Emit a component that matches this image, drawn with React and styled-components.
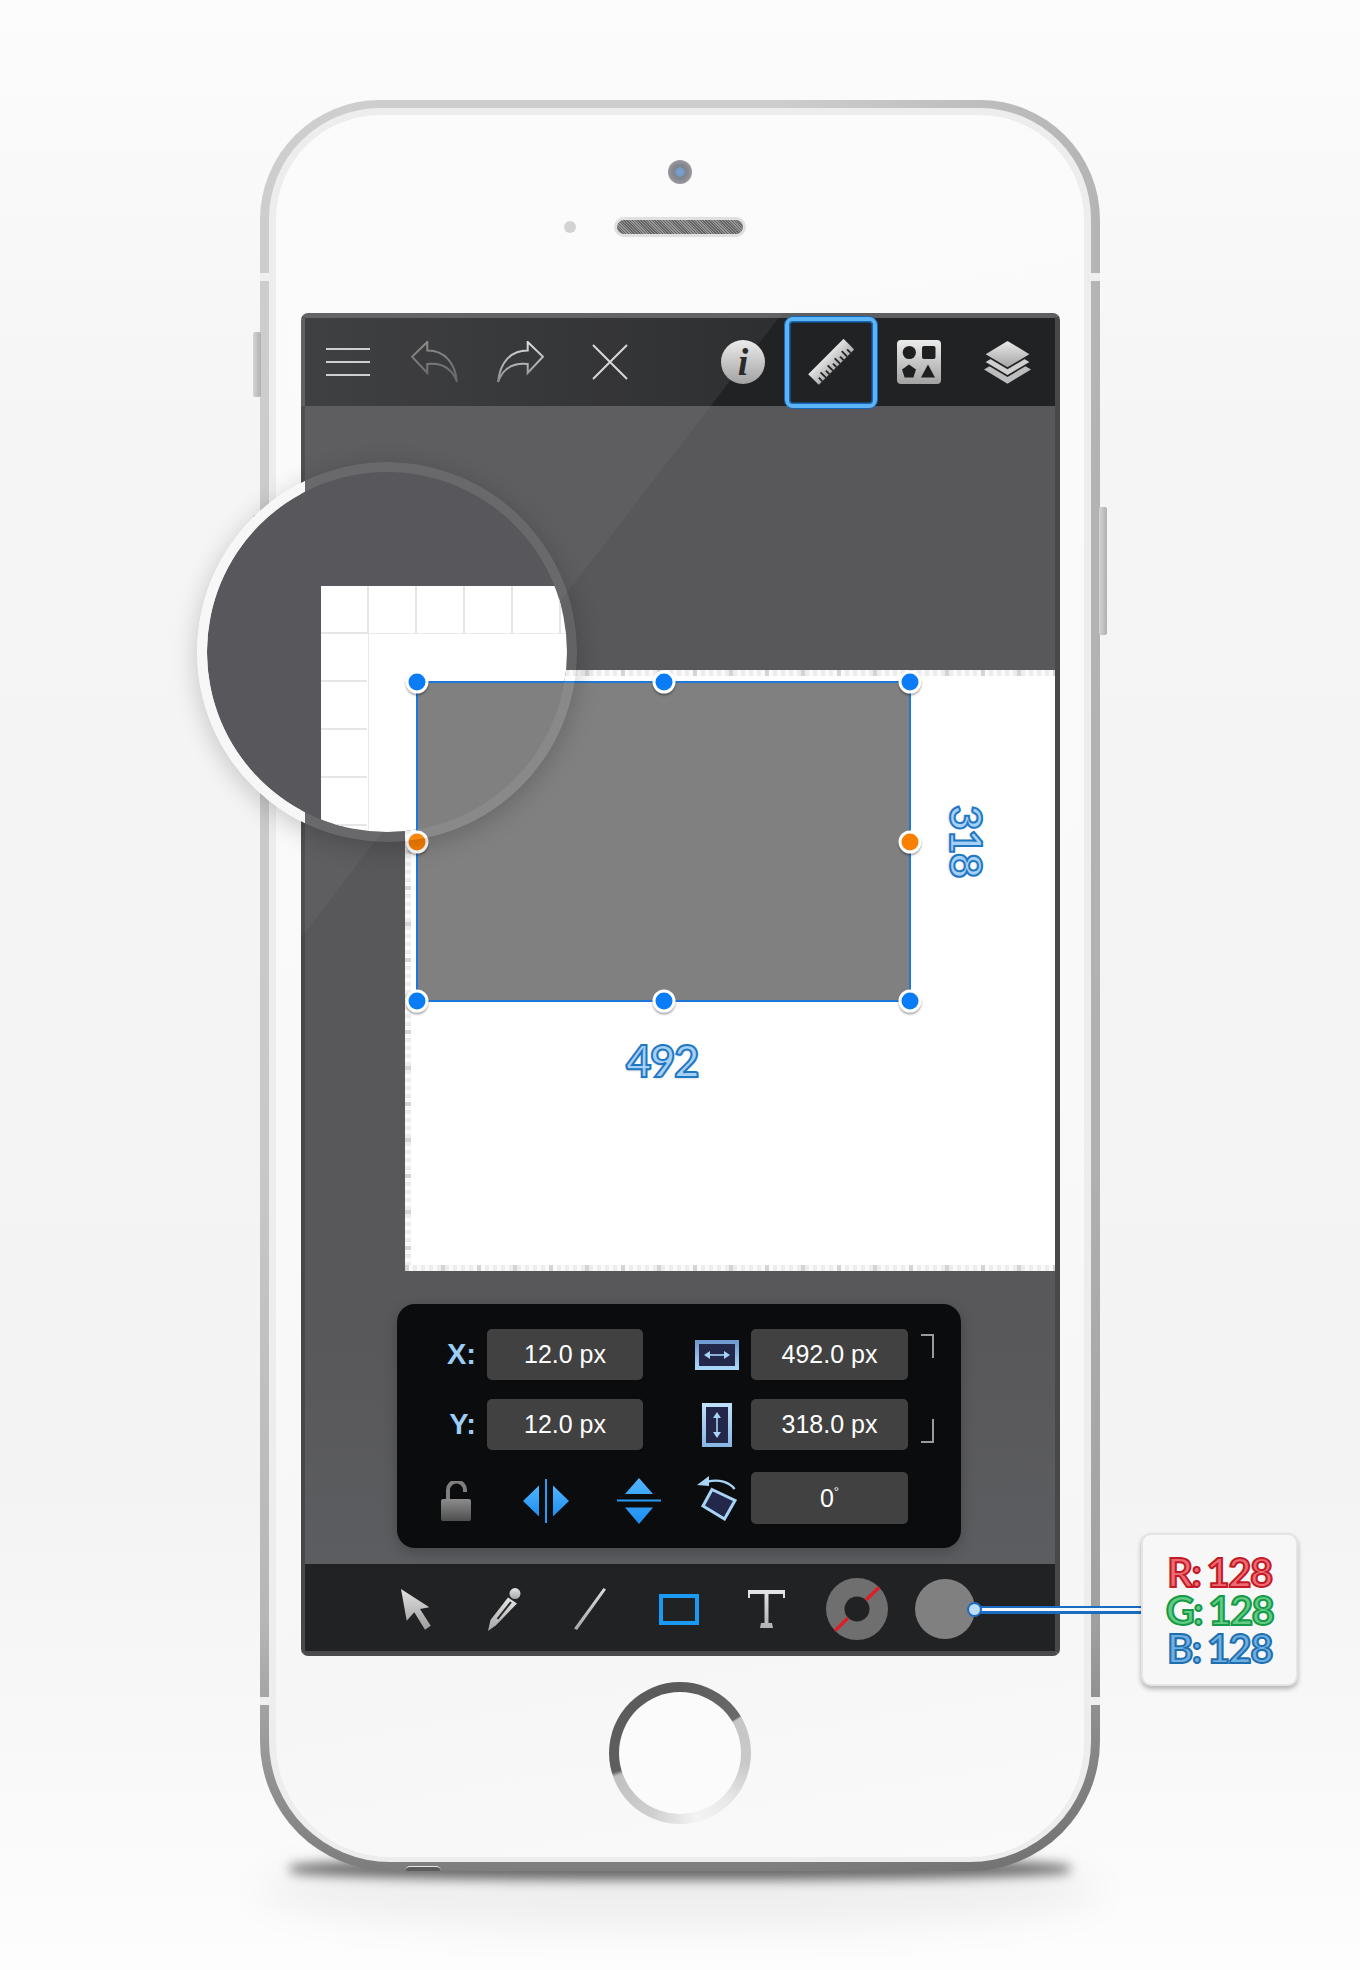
import styled, { createGlobalStyle } from 'styled-components';

const GlobalStyle = createGlobalStyle`
    html, body {
        margin: 0;
        padding: 0;
    }
    * {
        box-sizing: border-box;
    }
`;

function Sheen({ id, from = '#ececec', to = '#a2a2a2' }) {
    return (
        <defs>
            <linearGradient id={id} x1="0" y1="0" x2="0" y2="1">
                <stop offset="0" stopColor={from} />
                <stop offset="1" stopColor={to} />
            </linearGradient>
        </defs>
    );
}

function Hamburger() {
    return (
        <svg width="44" height="30" viewBox="0 0 44 30">
            <path d="M0 2h44M0 15h44M0 28h44" stroke="#cfcfcf" strokeWidth="2" />
        </svg>
    );
}

const ARROW = 'M1 15.7 16.3 1v8.5C34 9.5 44 22 46 41 41 27 31 21.5 16.3 23v9z';

function UndoIcon() {
    return (
        <svg width="47" height="43" viewBox="0 0 47 43">
            <Sheen id="undo" from="#8c8c8c" to="#666" />
            <path d={ARROW} fill="none" stroke="url(#undo)" strokeWidth="2" />
        </svg>
    );
}

function RedoIcon() {
    return (
        <svg width="47" height="43" viewBox="0 0 47 43">
            <Sheen id="redo" from="#dcdcdc" to="#8e8e8e" />
            <path d={ARROW} transform="translate(47 0) scale(-1 1)" fill="none" stroke="url(#redo)" strokeWidth="2" />
        </svg>
    );
}

function CloseIcon() {
    return (
        <svg width="36" height="36" viewBox="0 0 36 36">
            <path d="M1 1l34 34M35 1 1 35" stroke="#d8d8d8" strokeWidth="2" />
        </svg>
    );
}

function InfoIcon() {
    return (
        <svg width="44" height="44" viewBox="0 0 44 44">
            <Sheen id="info" />
            <circle cx="22" cy="22" r="22" fill="url(#info)" />
            <text x="22" y="35" textAnchor="middle" fontFamily="'Liberation Serif', serif" fontStyle="italic" fontWeight="700" fontSize="38" fill="#2a2a2b">i</text>
        </svg>
    );
}

function RulerIcon() {
    const ticks = [5, 10, 15, 20, 25, 30, 35, 40, 45];
    return (
        <svg width="47" height="47" viewBox="0 0 47 47">
            <Sheen id="ruler" from="#e4e4e4" to="#b0b0b0" />
            <g transform="translate(5.5 40.5) rotate(-45)">
                <rect x="0" y="-7.5" width="50" height="15" fill="url(#ruler)" />
                {ticks.map((t, i) => (
                    <line key={t} x1={t} x2={t} y1="7.5" y2={i % 2 ? 0 : 2.5} stroke="#212224" strokeWidth="1.8" />
                ))}
            </g>
        </svg>
    );
}

function ShapesIcon() {
    return (
        <svg width="44" height="44" viewBox="0 0 44 44">
            <Sheen id="shapes" />
            <rect width="44" height="44" rx="4" fill="url(#shapes)" />
            <circle cx="12.3" cy="12.5" r="6.6" fill="#1e1f21" />
            <rect x="25" y="6" width="13.5" height="13" rx="2" fill="#1e1f21" />
            <path d="M12 24.5 19 29.5 16.4 37.5H7.6L5 29.5z" fill="#1e1f21" />
            <path d="M31 24.5 38 37.5H24z" fill="#1e1f21" />
        </svg>
    );
}

function LayersIcon() {
    return (
        <svg width="47" height="44" viewBox="0 0 47 44">
            <Sheen id="layers" />
            <path d="M23.5 15.7 47 29.5 23.5 43.7 0 29.5z" fill="#bdbdbd" />
            <path d="M23.5 8 47 22 23.5 36 0 22z" fill="#cfcfcf" stroke="#212224" strokeWidth="1.6" />
            <path d="M23.5 0 47 14.3 23.5 28.3 0 14.3z" fill="url(#layers)" stroke="#212224" strokeWidth="1.6" />
        </svg>
    );
}

function WidthIcon() {
    return (
        <svg width="44" height="30" viewBox="0 0 44 30">
            <Sheen id="wbox" from="#6f9ad0" to="#a9d6f8" />
            <rect x="2" y="2" width="40" height="26" fill="#23274a" stroke="url(#wbox)" strokeWidth="4" />
            <path d="M11 15h22" stroke="#a7d3f4" strokeWidth="1.6" />
            <path d="M9 15l6-4v8zM35 15l-6-4v8z" fill="#a7d3f4" />
        </svg>
    );
}

function HeightIcon() {
    return (
        <svg width="30" height="44" viewBox="0 0 30 44">
            <Sheen id="hbox" from="#bfe0fa" to="#8ab8e6" />
            <rect x="2" y="2" width="26" height="40" fill="#23274a" stroke="url(#hbox)" strokeWidth="4" />
            <path d="M15 11v22" stroke="#a7d3f4" strokeWidth="1.6" />
            <path d="M15 9l-4 6h8zM15 35l-4-6h8z" fill="#a7d3f4" />
        </svg>
    );
}

function LockIcon() {
    return (
        <svg width="30" height="40" viewBox="0 0 30 40">
            <Sheen id="lock" from="#8c8c8c" to="#4e4e4e" />
            <path d="M7 18V9a8.5 8.5 0 0 1 17 0v2" fill="none" stroke="#7f7f7f" strokeWidth="4" />
            <rect y="18" width="30" height="22" rx="2" fill="url(#lock)" />
        </svg>
    );
}

function FlipHIcon() {
    return (
        <svg width="46" height="44" viewBox="0 0 46 44">
            <Sheen id="fliph" from="#52b6ff" to="#1c8df0" />
            <path d="M23 0v44" stroke="#2a9bf5" strokeWidth="2" />
            <path d="M0 22 16 6.5v31zM46 22 30 6.5v31z" fill="url(#fliph)" />
        </svg>
    );
}

function FlipVIcon() {
    return (
        <svg width="44" height="46" viewBox="0 0 44 46">
            <Sheen id="flipv" from="#52b6ff" to="#1c8df0" />
            <path d="M0 22.5h44" stroke="#2a9bf5" strokeWidth="2" />
            <path d="M22 0 36 16H8zM8 29.5H36L22 46z" fill="url(#flipv)" />
        </svg>
    );
}

function RotateIcon() {
    return (
        <svg width="40" height="46" viewBox="0 0 40 46">
            <path d="M37.6 14C32 7 22 4 11 6.5" fill="none" stroke="#a7d3f4" strokeWidth="2.4" />
            <path d="M0 10 12 1v10z" fill="#a7d3f4" />
            <path d="M15 14.5 38 25.5 27.5 44 6 31z" fill="#23274a" stroke="#a7d3f4" strokeWidth="3" />
        </svg>
    );
}

function PointerIcon() {
    return (
        <svg width="30" height="41" viewBox="0 0 30 41">
            <Sheen id="pointer" from="#e2e2e2" to="#9c9c9c" />
            <path d="M0 0 28.3 18.3 19 20 29.7 36.7 24 40.7 13.3 23.3 5.7 31.7z" fill="url(#pointer)" />
        </svg>
    );
}

function PencilIcon() {
    return (
        <svg width="33" height="43" viewBox="0 0 33 43">
            <Sheen id="pencil" from="#e6e6e6" to="#a4a4a4" />
            <circle cx="27" cy="5.6" r="5.5" fill="url(#pencil)" />
            <path d="M0 43 2.5 32 20 9.5 29 15.5 8 37.3z" fill="url(#pencil)" />
            <path d="M9.5 31 23 14" stroke="#212224" strokeWidth="2" />
        </svg>
    );
}

function LineIcon() {
    return (
        <svg width="32" height="42" viewBox="0 0 32 42">
            <Sheen id="linetool" from="#dcdcdc" to="#a8a8a8" />
            <path d="M29.5 0 32 1.5 3 42 0 40.5z" fill="url(#linetool)" />
        </svg>
    );
}

function RectIcon() {
    return (
        <svg width="40" height="31" viewBox="0 0 40 31">
            <rect x="2" y="2" width="36" height="27" fill="none" stroke="#1a9af2" strokeWidth="4" />
        </svg>
    );
}

function TextToolIcon() {
    return (
        <svg width="37" height="38" viewBox="0 0 37 38">
            <Sheen id="tool-t" from="#e6e6e6" to="#b2b2b2" />
            <path d="M0 0h37v8h-2V4H20.5v29H24l1 5H12l1-5h3.5V4H2v4H0z" fill="url(#tool-t)" />
        </svg>
    );
}

function StrokeIcon() {
    return (
        <svg width="62" height="62" viewBox="0 0 62 62">
            <circle cx="31" cy="31" r="31" fill="#6f6f6f" />
            <path d="M9 52.7 22 40M40 22 53 9.3" stroke="#e31b23" strokeWidth="3.2" />
            <circle cx="31" cy="31" r="12.5" fill="#212224" />
        </svg>
    );
}

const handles = [
    { x: 0, y: 0 },
    { x: 0.5, y: 0 },
    { x: 1, y: 0 },
    { x: 0, y: 0.5, warm: true },
    { x: 1, y: 0.5, warm: true },
    { x: 0, y: 1 },
    { x: 0.5, y: 1 },
    { x: 1, y: 1 },
];

export default function App() {
    return (
        <Page>
            <GlobalStyle />
            <FloorFade />
            <FloorShadow />
            <Phone>
                <SideKey $side="left" $top={232} $height={65} />
                <SideKey $side="left" $top={415} $height={260} />
                <SideKey $side="right" $top={407} $height={128} />
                <Band $top={173} />
                <Band $top={1597} />
                <Jack />
                <Rim>
                    <Front>
                        <Gloss />
                        <Sensors>
                            <Camera />
                            <EarRow>
                                <Proximity />
                                <Earpiece />
                            </EarRow>
                        </Sensors>
                        <Screen>
                            <TopBar>
                                <ToolGroup>
                                    <TopSlot><Hamburger /></TopSlot>
                                    <TopSlot><UndoIcon /></TopSlot>
                                    <TopSlot><RedoIcon /></TopSlot>
                                    <TopSlot $shift={4}><CloseIcon /></TopSlot>
                                </ToolGroup>
                                <ToolGroup>
                                    <RightSlot><InfoIcon /></RightSlot>
                                    <RightSlot $active><RulerIcon /></RightSlot>
                                    <RightSlot><ShapesIcon /></RightSlot>
                                    <RightSlot><LayersIcon /></RightSlot>
                                </ToolGroup>
                            </TopBar>
                            <Workspace>
                                <Canvas>
                                    <MeasureRow>
                                        <Selection>
                                            {handles.map((h) => (
                                                <Handle key={`${h.x}-${h.y}`} $x={h.x} $y={h.y} $warm={h.warm} />
                                            ))}
                                        </Selection>
                                        <HeightLabel>318</HeightLabel>
                                    </MeasureRow>
                                    <WidthLabel>492</WidthLabel>
                                </Canvas>
                                <Panel>
                                    <PanelRow $cols="90px 156px 108px 157px 1fr">
                                        <AxisLabel>X:</AxisLabel>
                                        <Field>12.0 px</Field>
                                        <IconCell><WidthIcon /></IconCell>
                                        <Field>492.0 px</Field>
                                        <LinkBracket $edge="top" />
                                    </PanelRow>
                                    <PanelRow $cols="90px 156px 108px 157px 1fr">
                                        <AxisLabel>Y:</AxisLabel>
                                        <Field>12.0 px</Field>
                                        <IconCell><HeightIcon /></IconCell>
                                        <Field>318.0 px</Field>
                                        <LinkBracket $edge="bottom" />
                                    </PanelRow>
                                    <PanelRow $cols="90px 210px 54px 157px" $gap={22}>
                                        <LockCell><LockIcon /></LockCell>
                                        <FlipGroup>
                                            <FlipHIcon />
                                            <FlipVIcon />
                                        </FlipGroup>
                                        <RotateCell><RotateIcon /></RotateCell>
                                        <Field>0<Degree>°</Degree></Field>
                                    </PanelRow>
                                </Panel>
                            </Workspace>
                            <BottomBar>
                                <BottomSlot><PointerIcon /></BottomSlot>
                                <BottomSlot><PencilIcon /></BottomSlot>
                                <BottomSlot $shift={-2}><LineIcon /></BottomSlot>
                                <BottomSlot $shift={-1}><RectIcon /></BottomSlot>
                                <BottomSlot $shift={-2}><TextToolIcon /></BottomSlot>
                                <BottomSlot $shift={1}><StrokeIcon /></BottomSlot>
                                <BottomSlot $shift={1}>
                                    <FillSwatch>
                                        <Leader />
                                        <LeaderDot />
                                        <ColorBadge>
                                            <ColorLine $fill="#ef6a72" $edge="#c21a26">R: 128</ColorLine>
                                            <ColorLine $fill="#62cc84" $edge="#159a48">G: 128</ColorLine>
                                            <ColorLine $fill="#6fb0e2" $edge="#1f6fae">B: 128</ColorLine>
                                        </ColorBadge>
                                    </FillSwatch>
                                </BottomSlot>
                            </BottomBar>
                        </Screen>
                        <HomeArea>
                            <HomeRing>
                                <HomeFace />
                            </HomeRing>
                        </HomeArea>
                    </Front>
                </Rim>
                <Lens>
                    <LensPaper />
                </Lens>
                <LensRing />
            </Phone>
        </Page>
    );
}

const Page = styled.div`
    position: relative;
    display: flex;
    justify-content: center;
    width: 1360px;
    height: 1970px;
    padding-top: 100px;
    overflow: hidden;
    background: linear-gradient(180deg, #fcfcfc 0%, #f5f5f5 22%, #f3f3f3 75%, #fdfdfd 100%);
    font-family: "Liberation Sans", Arial, sans-serif;
`;

const FloorShadow = styled.div`
    position: absolute;
    left: 290px;
    top: 1858px;
    width: 780px;
    height: 22px;
    border-radius: 40%;
    background: rgba(50, 50, 50, 0.7);
    filter: blur(6px);
`;

const FloorFade = styled.div`
    position: absolute;
    left: 260px;
    top: 1850px;
    width: 840px;
    height: 80px;
    border-radius: 50%;
    background: rgba(0, 0, 0, 0.05);
    filter: blur(18px);
`;

const Phone = styled.div`
    position: relative;
    width: 840px;
    height: 1771px;
    padding: 8px 9px 9px;
    border-radius: 120px 120px 130px 130px;
    background:
        linear-gradient(90deg, rgba(0, 0, 0, 0) 60%, rgba(0, 0, 0, 0.12) 100%),
        linear-gradient(180deg, #cecece 0%, #c8c8c8 60%, #b6b6b6 86%, #7d7d7d 100%);
`;

const SideKey = styled.div`
    position: absolute;
    top: ${(p) => p.$top}px;
    ${(p) => (p.$side === 'left' ? 'left: -7px' : 'right: -7px')};
    width: 8px;
    height: ${(p) => p.$height}px;
    border-radius: 2px;
    background: linear-gradient(90deg, #d4d4d4, #b0b0b0);
`;

const Band = styled.div`
    position: absolute;
    left: 0;
    right: 0;
    top: ${(p) => p.$top}px;
    height: 8px;
    background: linear-gradient(90deg, #efefef 0 10px, transparent 10px calc(100% - 10px), #efefef calc(100% - 10px));
`;

const Jack = styled.div`
    position: absolute;
    left: 145px;
    bottom: 0;
    width: 36px;
    height: 5px;
    border-radius: 18px 18px 0 0;
    background: #5c5c5c;
    border-top: 1px solid #e6e6e6;
`;

const Rim = styled.div`
    height: 100%;
    padding: 7px 7px 5px;
    border-radius: 111px 111px 121px 121px;
    background: #ededed;
`;

const Front = styled.div`
    position: relative;
    display: flex;
    flex-direction: column;
    height: 100%;
    border-radius: 104px 104px 114px 114px;
    background: linear-gradient(170deg, #fbfbfb 0%, #f9f9f9 60%, #f6f6f6 85%, #fafafa 100%);
`;

const Gloss = styled.div`
    position: absolute;
    inset: 0;
    border-radius: 104px 104px 114px 114px;
    clip-path: polygon(0 0, 659px 0, 0 855px);
    background:
        linear-gradient(90deg, rgba(255, 255, 255, 0.11), rgba(255, 255, 255, 0.02) 520px) 0 203px / 100% 88px no-repeat,
        rgba(255, 255, 255, 0.04);
`;

const Sensors = styled.div`
    display: flex;
    flex-direction: column;
    align-items: center;
    height: 198px;
    padding-top: 45px;
`;

const Camera = styled.div`
    width: 24px;
    height: 24px;
    margin-left: -1px;
    border-radius: 50%;
    background: radial-gradient(circle, #6f9ccf 0 3px, #7b7d83 6px, #95959a 12px);
`;

const EarRow = styled.div`
    display: grid;
    grid-template-columns: 1fr auto 1fr;
    align-items: center;
    width: 100%;
    margin-top: 33px;
`;

const Proximity = styled.div`
    justify-self: end;
    width: 12px;
    height: 12px;
    margin-right: 38px;
    border-radius: 50%;
    background: #d2d2d2;
`;

const Earpiece = styled.div`
    width: 132px;
    height: 20px;
    border: 3px solid #dfdfdf;
    border-radius: 10px;
    background: repeating-linear-gradient(45deg, #5f5f5f 0 1px, #929292 1px 2px);
`;

const Screen = styled.div`
    display: flex;
    flex-direction: column;
    width: 759px;
    height: 1343px;
    margin-left: 25px;
    border-radius: 7px;
    border-style: solid;
    border-width: 5px 5px 5px 4px;
    border-color: #5e5e60 #48484a #4a4a4c;
    background: #58585b;
`;

const TopBar = styled.div`
    display: flex;
    justify-content: space-between;
    height: 88px;
    padding: 0 4px 0 0;
    background: #212224;
`;

const ToolGroup = styled.div`
    display: flex;
`;

const TopSlot = styled.div`
    display: flex;
    align-items: center;
    justify-content: center;
    width: 86px;
    transform: translateX(${(p) => p.$shift || 0}px);
`;

const RightSlot = styled.div`
    position: relative;
    display: flex;
    align-items: center;
    justify-content: center;
    width: 88px;

    ${(p) => p.$active && `
        &::after {
            content: "";
            position: absolute;
            inset: -1px -2px -2px -2px;
            border: 4px solid #5db4f7;
            border-radius: 8px;
            box-shadow: 0 0 0 1px #1669b8, inset 0 0 0 1.5px #1669b8;
        }
    `}
`;

const Workspace = styled.div`
    flex: 1;
    padding-top: 264px;
    background: linear-gradient(180deg, #58585b 0%, #58585b 80%, #5c5d60 100%);
`;

const Canvas = styled.div`
    position: relative;
    height: 601px;
    margin-left: 100px;
    padding: 11px 0 0 11px;
    background:
        repeating-linear-gradient(90deg, #d4d4d4 0 4px, transparent 4px 36px) 0 0 / 100% 6px no-repeat,
        repeating-linear-gradient(90deg, #ececec 0 4px, #fafafa 4px 8px) 0 0 / 100% 6px no-repeat,
        repeating-linear-gradient(90deg, #d4d4d4 0 4px, transparent 4px 36px) 0 100% / 100% 6px no-repeat,
        repeating-linear-gradient(90deg, #ececec 0 4px, #fafafa 4px 8px) 0 100% / 100% 6px no-repeat,
        repeating-linear-gradient(180deg, #d4d4d4 0 4px, transparent 4px 36px) 0 0 / 6px 100% no-repeat,
        repeating-linear-gradient(180deg, #ececec 0 4px, #fafafa 4px 8px) 0 0 / 6px 100% no-repeat,
        #fff;
`;

const MeasureRow = styled.div`
    display: flex;
    align-items: center;
    gap: 34px;
`;

const Selection = styled.div`
    position: relative;
    z-index: 2;
    width: 495px;
    height: 321px;
    background: #808080;
    box-shadow: inset 0 0 0 2px #1f78d8;
`;

const Handle = styled.div`
    position: absolute;
    left: calc(1px + (100% - 2px) * ${(p) => p.$x});
    top: calc(1px + (100% - 2px) * ${(p) => p.$y});
    width: 23px;
    height: 23px;
    transform: translate(-50%, -50%);
    border: 3px solid #fff;
    border-radius: 50%;
    background: ${(p) => (p.$warm ? '#f98000' : '#0a7cf5')};
    box-shadow: 0 2px 2px rgba(0, 0, 0, 0.3);
`;

const outlinedNumber = `
    font-family: Lato, "Liberation Sans", sans-serif;
    font-weight: 700;
    font-size: 44px;
    line-height: 1;
    letter-spacing: -1.5px;
    color: #a6d0f4;
    -webkit-text-stroke: 2px #1f78c4;
    text-shadow: 0 2px 2px rgba(0, 0, 0, 0.12);
`;

const HeightLabel = styled.div`
    ${outlinedNumber}
    writing-mode: vertical-rl;
`;

const WidthLabel = styled.div`
    ${outlinedNumber}
    width: 492px;
    margin-top: 36px;
    text-align: center;
`;

const Panel = styled.div`
    position: relative;
    display: flex;
    flex-direction: column;
    gap: 19px;
    width: 564px;
    height: 244px;
    margin: 33px 0 0 92px;
    padding-top: 25px;
    border-radius: 18px;
    background: #0b0c0e;
    box-shadow: 0 4px 14px rgba(0, 0, 0, 0.22);
`;

const PanelRow = styled.div`
    display: grid;
    grid-template-columns: ${(p) => p.$cols};
    height: 51px;
    margin-top: ${(p) => (p.$gap ? p.$gap - 19 : 0)}px;
`;

const AxisLabel = styled.div`
    display: flex;
    align-items: center;
    justify-content: flex-end;
    padding-right: 11px;
    font-size: 29px;
    font-weight: 700;
    color: #9ccdf3;
`;

const Field = styled.div`
    display: flex;
    align-items: center;
    justify-content: center;
    border-radius: 5px;
    background: #414141;
    font-size: 25px;
    color: #fff;
`;

const Degree = styled.span`
    align-self: flex-start;
    margin-top: 12px;
    font-size: 13px;
`;

const IconCell = styled.div`
    display: flex;
    align-items: center;
    justify-content: center;
    padding-left: 40px;
`;

const LinkBracket = styled.div`
    width: 13px;
    height: 24px;
    margin-left: 13px;
    border-right: 2px solid #9a9a9a;
    ${(p) => (p.$edge === 'top'
        ? 'margin-top: 5px; border-top: 2px solid #9a9a9a; align-self: start;'
        : 'margin-bottom: 7px; border-bottom: 2px solid #9a9a9a; align-self: end;')}
`;

const LockCell = styled.div`
    display: flex;
    align-items: center;
    justify-content: flex-end;
    padding: 6px 16px 0 0;
`;

const FlipGroup = styled.div`
    display: flex;
    align-items: center;
    gap: 48px;
    padding: 6px 0 0 36px;
`;

const RotateCell = styled.div`
    display: flex;
    align-items: center;
`;

const BottomBar = styled.div`
    display: flex;
    height: 87px;
    padding: 3px 0 0 67px;
    background: #212224;
`;

const BottomSlot = styled.div`
    display: flex;
    align-items: center;
    justify-content: center;
    width: 88px;
    transform: translateX(${(p) => p.$shift || 0}px);
`;

const FillSwatch = styled.div`
    position: relative;
    width: 60px;
    height: 60px;
    border-radius: 50%;
    background: #808080;
`;

const Leader = styled.div`
    position: absolute;
    left: 60px;
    top: 27px;
    width: 167px;
    height: 8px;
    background: linear-gradient(180deg, #1a6cc0 0 2.5px, #f4f9ff 2.5px 5.5px, #1a6cc0 5.5px);
`;

const LeaderDot = styled.div`
    position: absolute;
    left: 52px;
    top: 23px;
    width: 15px;
    height: 15px;
    border: 2px solid #1a6cc0;
    border-radius: 50%;
    background: #bcdcf8;
`;

const ColorBadge = styled.div`
    position: absolute;
    left: 226px;
    top: -46px;
    display: flex;
    flex-direction: column;
    align-items: center;
    justify-content: center;
    width: 157px;
    height: 153px;
    border: 2px solid #e4e4e4;
    border-radius: 10px;
    background: #f7f7f7;
    box-shadow: 0 3px 5px rgba(0, 0, 0, 0.28);
`;

const ColorLine = styled.div`
    font-family: Lato, "Liberation Sans", sans-serif;
    font-weight: 700;
    font-size: 40px;
    line-height: 38px;
    letter-spacing: -1.5px;
    word-spacing: -2px;
    color: ${(p) => p.$fill};
    -webkit-text-stroke: 2px ${(p) => p.$edge};
`;

const HomeArea = styled.div`
    flex: 1;
    display: flex;
    align-items: center;
    justify-content: center;
    padding-bottom: 7px;
`;

const HomeRing = styled.div`
    display: flex;
    align-items: center;
    justify-content: center;
    width: 142px;
    height: 142px;
    border-radius: 50%;
    background: conic-gradient(
        #5a5a5a 0deg,
        #6a6a6a 58deg,
        #c6c6c6 60deg,
        #c9c9c9 100deg,
        #e8e8e8 135deg,
        #f4f4f4 165deg,
        #cfcfcf 205deg,
        #c0c0c0 250deg,
        #5e5e5e 254deg,
        #5a5a5a 360deg
    );
`;

const HomeFace = styled.div`
    width: 122px;
    height: 122px;
    border-radius: 50%;
    background: #fbfbfb;
`;

const Lens = styled.div`
    position: absolute;
    z-index: 1;
    left: -53px;
    top: 372px;
    width: 360px;
    height: 360px;
    overflow: hidden;
    border-radius: 50%;
    background: #58585c;
`;

const LensPaper = styled.div`
    position: absolute;
    left: 114px;
    top: 114px;
    width: 300px;
    height: 300px;
    background:
        linear-gradient(#e8e8e8, #e8e8e8) 48px 47px / 100% 1px no-repeat,
        linear-gradient(#e8e8e8, #e8e8e8) 47px 48px / 1px 100% no-repeat,
        repeating-linear-gradient(90deg, transparent 0 46px, #e6e6e6 46px 48px) 0 0 / 100% 48px no-repeat,
        repeating-linear-gradient(180deg, transparent 0 46px, #e6e6e6 46px 48px) 0 0 / 46px 100% no-repeat,
        #fff;
`;

const LensRing = styled.div`
    position: absolute;
    z-index: 3;
    left: -63px;
    top: 362px;
    width: 380px;
    height: 380px;
    border-radius: 50%;
    box-shadow: 0 6px 26px rgba(0, 0, 0, 0.2);
    pointer-events: none;

    &::before {
        content: "";
        position: absolute;
        inset: 0;
        border-radius: 50%;
        background: linear-gradient(90deg, #f7f7f7 0 108px, rgba(255, 255, 255, 0.07) 108px);
        -webkit-mask: radial-gradient(circle, transparent 179.5px, #000 180.5px);
        mask: radial-gradient(circle, transparent 179.5px, #000 180.5px);
    }
`;
